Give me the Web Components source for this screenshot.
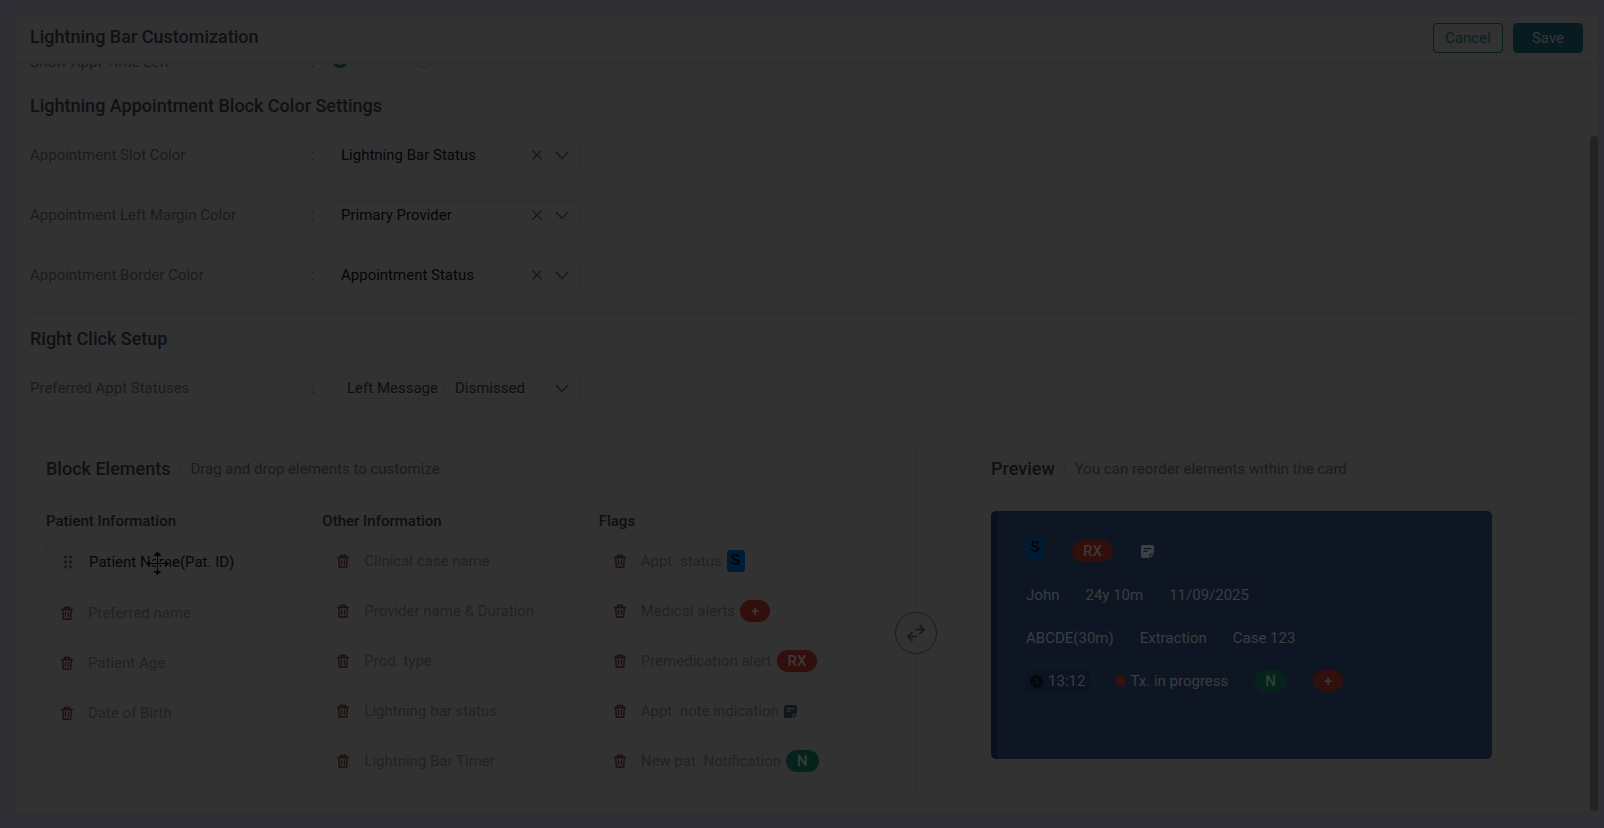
<!DOCTYPE html>
<html lang="en">
<head>
<meta charset="utf-8">
<title>Lightning Bar Customization</title>
<style>
  html, body { height: 100%; }
  body {
    margin: 0;
    background: #302f35;
    color: #191b1d;
    font-family: Roboto, "Liberation Sans", sans-serif;
    font-size: 15px;
    line-height: 20px;
    --surface: #323233;
    --line: #2d2f2f;
    --heading: #0e1113;
    --strong: #0d0f10;
    --value: #060606;
    --red: #300f0d;
    --green: #07211b;
  }
</style>
</head>
<body>

<settings-page>
  <lb-button slot="actions">Cancel</lb-button>
  <lb-button slot="actions" primary>Save</lb-button>

  <radio-row label="Show Appt Time Left"></radio-row>

  <settings-section heading="Lightning Appointment Block Color Settings">
    <select-row label="Appointment Slot Color" value="Lightning Bar Status"></select-row>
    <select-row label="Appointment Left Margin Color" value="Primary Provider"></select-row>
    <select-row label="Appointment Border Color" value="Appointment Status"></select-row>
  </settings-section>

  <settings-section heading="Right Click Setup">
    <tags-row label="Preferred Appt Statuses" tags="Left Message,Dismissed"></tags-row>
  </settings-section>

  <block-panel>
    <element-list slot="elements" heading="Patient Information">
      <element-item dragging>Patient Name(Pat. ID)</element-item>
      <element-item>Preferred name</element-item>
      <element-item>Patient Age</element-item>
      <element-item>Date of Birth</element-item>
    </element-list>
    <element-list slot="elements" heading="Other Information">
      <element-item>Clinical case name</element-item>
      <element-item>Provider name &amp; Duration</element-item>
      <element-item>Prod. type</element-item>
      <element-item>Lightning bar status</element-item>
      <element-item>Lightning Bar Timer</element-item>
    </element-list>
    <element-list slot="elements" heading="Flags">
      <element-item>Appt. status<flag-badge slot="flag" kind="status">S</flag-badge></element-item>
      <element-item>Medical alerts<flag-badge slot="flag" kind="alert">+</flag-badge></element-item>
      <element-item>Premedication alert<flag-badge slot="flag" kind="alert">RX</flag-badge></element-item>
      <element-item>Appt. note indication<lb-icon slot="flag" name="note" style="color:#13161a"></lb-icon></element-item>
      <element-item>New pat. Notification<flag-badge slot="flag" kind="new">N</flag-badge></element-item>
    </element-list>
    <preview-card slot="preview"></preview-card>
  </block-panel>
</settings-page>

<template id="page-tpl">
  <style>
    :host { display: flex; box-sizing: border-box; height: 100vh; padding: 13px 5px 16px 14px; }
    .card {
      position: relative; flex: 1; display: flex; flex-direction: column; min-width: 0;
      background: var(--surface); border: 1px solid var(--line); border-radius: 5px; box-sizing: border-box;
    }
    header {
      display: flex; align-items: center; justify-content: space-between;
      height: 49px; padding: 0 15px; border-bottom: 1px solid var(--line);
    }
    h1 { margin: 0 0 3px; font-size: 18px; line-height: 24px; font-weight: 500; color: var(--heading); }
    .actions { display: flex; gap: 10px; margin-bottom: 2px; }
    .scroll { flex: 1; min-height: 0; overflow-y: auto; scrollbar-width: none; }
    .content { padding: 63px 15px 14px; }
    .thumb {
      position: absolute; right: 0; top: 122px; bottom: 0; width: 8px;
      border-radius: 4px; background: #222423;
    }
  </style>
  <main class="card">
    <header>
      <h1>Lightning Bar Customization</h1>
      <div class="actions"><slot name="actions"></slot></div>
    </header>
    <div class="scroll"><div class="content"><slot></slot></div></div>
    <div class="thumb"></div>
  </main>
</template>

<template id="section-tpl">
  <style>
    :host { display: block; padding-bottom: 22px; margin-bottom: 14px; border-bottom: 1px solid var(--line); }
    h2 { margin: 0 0 22px; font-size: 18px; line-height: 24px; font-weight: 500; color: var(--heading); }
    .rows { display: flex; flex-direction: column; gap: 30px; }
  </style>
  <h2></h2>
  <div class="rows"><slot></slot></div>
</template>

<template id="panel-tpl">
  <style>
    :host {
      position: relative; display: flex; box-sizing: border-box; min-height: 355px; margin-top: 16px;
      border: 1px solid var(--line); border-radius: 5px;
    }
    section { box-sizing: border-box; padding-top: 14px; }
    .elements { flex: 0 0 calc(57% + 1px); padding-left: 15px; padding-right: 60px; border-right: 1px solid var(--line); }
    .preview { flex: 1; padding-left: 75px; padding-right: 90px; }
    .head { display: flex; align-items: center; margin-bottom: 30px; }
    h2 { margin: 0; font-size: 18px; line-height: 24px; font-weight: 500; color: var(--heading); }
    .head span { margin-left: 9px; padding-left: 10px; border-left: 1px solid #2b2d2e; line-height: 16px; }
    .columns { display: grid; grid-template-columns: repeat(3, 1fr); gap: 20px; }
    /* sits on the line between both halves */
    button {
      position: absolute; left: calc(57% + 1px); top: 50%; transform: translate(-50%, -50%); margin: 13px 0 0;
      display: flex; align-items: center; justify-content: center; width: 42px; height: 42px; padding: 0;
      border: 1px solid #1a1d1f; border-radius: 50%; background: var(--surface); color: #15181a;
    }
  </style>
  <section class="elements">
    <div class="head"><h2>Block Elements</h2><span>Drag and drop elements to customize</span></div>
    <div class="columns"><slot name="elements"></slot></div>
  </section>
  <section class="preview">
    <div class="head"><h2>Preview</h2><span>You can reorder elements within the card</span></div>
    <slot name="preview"></slot>
  </section>
  <button type="button" aria-label="Swap"><lb-icon name="swap"></lb-icon></button>
</template>

<template id="preview-tpl">
  <style>
    :host {
      display: flex; flex-direction: column; gap: 21px; box-sizing: border-box; min-height: 248px;
      padding: 26px 28px 26px 29px; border-left: 6px solid #0a101e; border-radius: 5px;
      background: #0e1624; color: #3b3e40;
    }
    div { display: flex; align-items: center; gap: 26px; min-height: 22px; }
    .flags { align-items: flex-end; gap: 28px; height: 25px; margin-bottom: 1px; }
    .flags flag-badge[kind=status] { align-self: flex-start; }
    .flags lb-icon { margin-bottom: 4px; color: #3f4041; }
    .timer {
      display: flex; align-items: center; gap: 5px; box-sizing: border-box; height: 22px;
      padding: 0 4px 0 3px; border: 1px solid #0b1220; border-radius: 4px; background: #0c1422;
    }
    .timer lb-icon { color: #05080e; }
    .state { display: flex; align-items: center; gap: 4px; }
    .state::before { content: ""; width: 10px; height: 10px; border-radius: 50%; background: #38100f; }
  </style>
  <div class="flags">
    <flag-badge kind="status">S</flag-badge>
    <flag-badge kind="alert">RX</flag-badge>
    <lb-icon name="note"></lb-icon>
  </div>
  <div><span>John</span><span>24y 10m</span><span>11/09/2025</span></div>
  <div><span>ABCDE(30m)</span><span>Extraction</span><span>Case 123</span></div>
  <div>
    <span class="timer"><lb-icon name="clock"></lb-icon>13:12</span>
    <span class="state">Tx. in progress</span>
    <flag-badge kind="new">N</flag-badge>
    <flag-badge kind="alert">+</flag-badge>
  </div>
</template>

<script>
  const ICONS = {
    close: [12, '<path d="M1.500 1.500L10.500 10.500M10.500 1.500L1.500 10.500" fill="none" stroke="currentColor" stroke-width="1.200"/>'],
    down: [14, '<path d="M1 4L7 10.500L13 4" fill="none" stroke="currentColor" stroke-width="1.300"/>'],
    trash: [14, '<path d="M1 3.500H13M4.500 3.500V1.500H9.500V3.500M2.700 3.500L3.300 13H10.700L11.300 3.500M5.500 5.500V11M8.500 5.500V11" fill="none" stroke="currentColor" stroke-width="1.300"/>'],
    drag: [14, '<g fill="currentColor"><circle cx="4.500" cy="2" r="1.400"/><circle cx="9.500" cy="2" r="1.400"/><circle cx="4.500" cy="7" r="1.400"/><circle cx="9.500" cy="7" r="1.400"/><circle cx="4.500" cy="12" r="1.400"/><circle cx="9.500" cy="12" r="1.400"/></g>'],
    note: [13, '<path d="M2 0H11A2 2 0 0 1 13 2V8.500H10A1.500 1.500 0 0 0 8.500 10V13H2A2 2 0 0 1 0 11V2A2 2 0 0 1 2 0ZM2.800 3V4.200H10.200V3ZM2.800 5.800V7H6.500V5.800ZM9.600 13V10.500Q9.600 9.600 10.500 9.600H13Z" fill="currentColor" fill-rule="evenodd"/>'],
    clock: [13, '<circle cx="6.500" cy="6.500" r="6.500" fill="currentColor"/><path d="M6.500 3V7L9 8.500" fill="none" stroke="#161d27"/>'],
    swap: [18, '<path d="M8 5.500H17M12.500 1.200L17 5.500L12.500 9.800M10 12.500H1M5.500 8.200L1 12.500L5.500 16.800" fill="none" stroke="currentColor" stroke-width="1.700"/>'],
    move: [24, '<path d="M12.500 0.500L16.500 5H13V12H20V8.500L24 12.500L20 16.500V13H13V20H16.500L12.500 24L8.500 20H12V13H5V16.500L1 12.500L5 8.500V12H12V5H8.500Z" fill="#040404" stroke="#323233" stroke-width="2" paint-order="stroke"/>']
  };

  function fromTemplate(el, id) {
    const root = el.attachShadow({ mode: 'open' });
    root.appendChild(document.getElementById(id).content.cloneNode(true));
    return root;
  }

  const ROW_STYLE = `
    :host { display: grid; grid-template-columns: 281px 19px 251px; align-items: center; height: 30px; }
    .box { display: flex; align-items: center; box-sizing: border-box; height: 30px; padding: 0 11px 0 10px;
      border: 1px solid var(--line); border-radius: 4px; color: #151719; }
    button { display: flex; padding: 0; border: 0; background: none; color: inherit; }
  `;

  class LbIcon extends HTMLElement {
    connectedCallback() {
      if (this.shadowRoot) return;
      const [size, shape] = ICONS[this.getAttribute('name')];
      this.attachShadow({ mode: 'open' }).innerHTML = `
        <style>:host { display: inline-flex; } svg { display: block; }</style>
        <svg width="${size}" height="${size}" viewBox="0 0 ${size} ${size}" aria-hidden="true">${shape}</svg>`;
    }
  }

  class LbButton extends HTMLElement {
    constructor() {
      super();
      this.attachShadow({ mode: 'open' }).innerHTML = `
        <style>
          :host { display: block; }
          button { box-sizing: border-box; width: 70px; height: 30px; padding: 0; font: inherit;
            border: 1px solid #091d21; border-radius: 4px; background: transparent; color: #0c1f22; }
          :host([primary]) button { background: #071b20; border-color: #071b20; color: #353839; }
        </style>
        <button type="button"><slot></slot></button>`;
    }
  }

  class RadioRow extends HTMLElement {
    connectedCallback() {
      this.attachShadow({ mode: 'open' }).innerHTML = `
        <style>${ROW_STYLE}
          :host { margin-bottom: 17px; }
          .group { display: flex; gap: 68px; padding-left: 2px; }
          input { appearance: none; box-sizing: border-box; width: 16px; height: 16px; margin: 0 0 4px;
            border: 1px solid #242627; border-radius: 50%; }
          input:checked { border: 3px solid #0b1a1c; }
        </style>
        <span id="name">${this.getAttribute('label')}</span><span>:</span>
        <div class="group" role="radiogroup" aria-labelledby="name">
          <input type="radio" name="choice" aria-labelledby="name" checked>
          <input type="radio" name="choice" aria-labelledby="name">
        </div>`;
    }
  }

  class SelectRow extends HTMLElement {
    connectedCallback() {
      this.attachShadow({ mode: 'open' }).innerHTML = `
        <style>${ROW_STYLE}
          select { appearance: none; flex: 1; min-width: 0; padding: 0; border: 0; background: none;
            font: inherit; color: var(--value); }
          .box { gap: 12px; }
        </style>
        <label for="field">${this.getAttribute('label')}</label><span>:</span>
        <div class="box">
          <select id="field"><option>${this.getAttribute('value')}</option></select>
          <button type="button" aria-label="Clear"><lb-icon name="close"></lb-icon></button>
          <lb-icon name="down"></lb-icon>
        </div>`;
    }
  }

  class TagsRow extends HTMLElement {
    connectedCallback() {
      const tags = this.getAttribute('tags').split(',').map(t => `<span class="tag">${t}</span>`).join('');
      this.attachShadow({ mode: 'open' }).innerHTML = `
        <style>${ROW_STYLE}
          .tags { display: flex; flex: 1; gap: 5px; }
          .tag { box-sizing: border-box; height: 22px; padding: 0 5px; border: 1px solid var(--line);
            border-radius: 4px; color: var(--strong); }
        </style>
        <span id="name">${this.getAttribute('label')}</span><span>:</span>
        <div class="box">
          <div class="tags">${tags}</div>
          <button type="button" aria-labelledby="name"><lb-icon name="down"></lb-icon></button>
        </div>`;
    }
  }

  class SettingsSection extends HTMLElement {
    connectedCallback() {
      fromTemplate(this, 'section-tpl').querySelector('h2').textContent = this.getAttribute('heading');
    }
  }

  class ElementList extends HTMLElement {
    connectedCallback() {
      this.attachShadow({ mode: 'open' }).innerHTML = `
        <style>
          :host { display: block; }
          h3 { margin: 0 0 10px; font-size: 15px; line-height: 20px; font-weight: 500; color: var(--strong); }
          .items { display: flex; flex-direction: column; gap: 10px; }
        </style>
        <h3>${this.getAttribute('heading')}</h3>
        <div class="items"><slot></slot></div>`;
    }
  }

  class ElementItem extends HTMLElement {
    connectedCallback() {
      const dragging = this.hasAttribute('dragging');
      this.attachShadow({ mode: 'open' }).innerHTML = `
        <style>
          :host { position: relative; display: flex; align-items: center; height: 40px; padding-left: 14px;
            color: #202223; white-space: nowrap; }
          :host([dragging]) { border: 1px solid var(--line); border-radius: 5px; color: var(--value); }
          button { display: flex; margin: 0 14px 0 0; padding: 0; border: 0; background: none; color: #1d0e0b; }
          :host([dragging]) button { color: #0d191b; }
          .flag { display: flex; margin-left: 5px; }
          .cursor { position: absolute; left: 98px; top: 9px; }
        </style>
        <button type="button" aria-label="${dragging ? 'Drag' : 'Remove'}"><lb-icon name="${dragging ? 'drag' : 'trash'}"></lb-icon></button>
        <span><slot></slot></span>
        <span class="flag"><slot name="flag"></slot></span>
        ${dragging ? '<lb-icon class="cursor" name="move"></lb-icon>' : ''}`;
    }
  }

  class FlagBadge extends HTMLElement {
    constructor() {
      super();
      this.attachShadow({ mode: 'open' }).innerHTML = `
        <style>
          :host { display: inline-block; box-sizing: border-box; height: 22px; padding: 0 11px;
            border-radius: 11px; line-height: 22px; font-weight: 500; color: #403837; }
          :host([kind=status]) { padding: 0 4px; min-width: 18px; border-radius: 4px; line-height: 20px; text-align: center; background: #001b35; color: #020407; }
          :host([kind=alert]) { background: var(--red); }
          :host([kind=new]) { background: var(--green); color: #333f3b; }
        </style>
        <slot></slot>`;
    }
  }

  class BlockPanel extends HTMLElement {
    constructor() { super(); fromTemplate(this, 'panel-tpl'); }
  }

  class PreviewCard extends HTMLElement {
    constructor() { super(); fromTemplate(this, 'preview-tpl'); }
  }

  class SettingsPage extends HTMLElement {
    constructor() { super(); fromTemplate(this, 'page-tpl'); }
    scrollToEnd() {
      const box = this.shadowRoot.querySelector('.scroll');
      box.scrollTop = box.scrollHeight;
    }
  }

  customElements.define('lb-icon', LbIcon);
  customElements.define('lb-button', LbButton);
  customElements.define('radio-row', RadioRow);
  customElements.define('select-row', SelectRow);
  customElements.define('tags-row', TagsRow);
  customElements.define('settings-section', SettingsSection);
  customElements.define('element-list', ElementList);
  customElements.define('element-item', ElementItem);
  customElements.define('flag-badge', FlagBadge);
  customElements.define('block-panel', BlockPanel);
  customElements.define('preview-card', PreviewCard);
  customElements.define('settings-page', SettingsPage);

  document.querySelector('settings-page').scrollToEnd();
</script>
</body>
</html>
